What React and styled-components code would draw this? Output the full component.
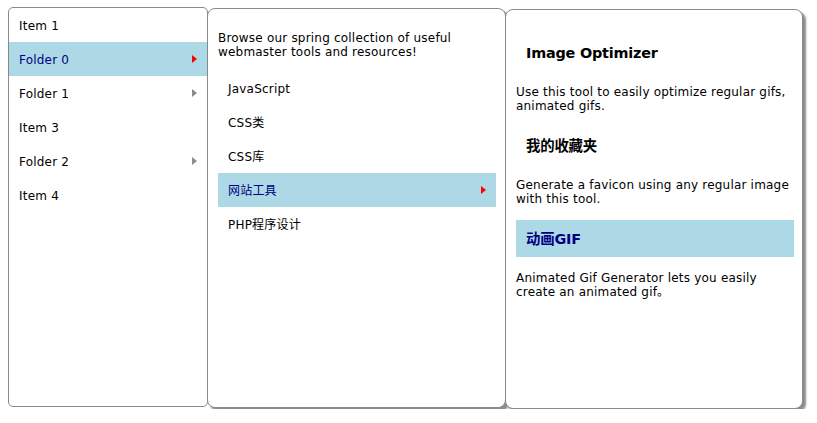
import React from "react";
import styled, { createGlobalStyle } from "styled-components";

const Global = createGlobalStyle`
  html, body { margin: 0; padding: 0; background: #fff; }
  body {
    font-family: "DejaVu Sans", Verdana, "Noto Sans CJK SC", sans-serif;
    font-size: 12px;
    color: #000;
  }
  * { box-sizing: border-box; }
`;

const Stage = styled.div`
  display: flex;
  align-items: flex-start;
  padding: 7px 8px 0 8px;
`;

const Panel = styled.div`
  position: relative;
  width: ${(p) => p.$w}px;
  height: 400px;
  margin-top: ${(p) => p.$drop}px;
  margin-left: ${(p) => (p.$first ? 0 : -1)}px;
  border: 1px solid #8a8a8a;
  border-radius: ${(p) => p.$radius}px;
  background: #fff;
  padding: ${(p) => p.$pad};
  box-shadow: ${(p) => (p.$shadow ? "3px 3px 2px rgba(0,0,0,0.45)" : "none")};
  font-family: "DejaVu Sans", Verdana, "Noto Sans CJK SC", sans-serif;
`;

const List = styled.ul`
  list-style: none;
  margin: 0;
  padding: 0;
`;

const Row = styled.li`
  display: flex;
  align-items: center;
  justify-content: space-between;
  height: 34px;
  padding: 1px 10px 0 10px;
  font-size: 12px;
  line-height: 14px;
  letter-spacing: 0.2px;
  background: ${(p) => (p.$active ? "#add8e6" : "transparent")};
  color: ${(p) => (p.$active ? "#000080" : "#000")};
`;

const Arrow = styled.span`
  width: 0;
  height: 0;
  margin-top: -1px;
  border-top: 4.5px solid transparent;
  border-bottom: 4.5px solid transparent;
  border-left: 5px solid ${(p) => (p.$active ? "#ff0000" : "#8c8c8c")};
`;

const Intro = styled.p`
  margin: 12px 0;
  font-size: 12px;
  line-height: 14px;
  letter-spacing: 0.2px;
`;

const Heading = styled.div`
  margin-top: ${(p) => (p.$first ? 14 : 0)}px;
  height: 37px;
  display: flex;
  align-items: center;
  padding: 1px 10px 0 10px;
  font-size: 14.4px;
  font-weight: bold;
  line-height: 17px;
  letter-spacing: -0.2px;
  background: ${(p) => (p.$active ? "#add8e6" : "transparent")};
  color: ${(p) => (p.$active ? "#000080" : "#000")};
`;

const Desc = styled.p`
  margin: 14px 0;
  font-size: 12px;
  line-height: 14px;
  letter-spacing: 0.2px;
`;

const rootItems = [
  { label: "Item 1" },
  { label: "Folder 0", folder: true, active: true },
  { label: "Folder 1", folder: true },
  { label: "Item 3" },
  { label: "Folder 2", folder: true },
  { label: "Item 4" },
];

const subItems = [
  { label: "JavaScript" },
  { label: "CSS类" },
  { label: "CSS库" },
  { label: "网站工具", folder: true, active: true },
  { label: "PHP程序设计" },
];

const tools = [
  {
    title: "Image Optimizer",
    text: "Use this tool to easily optimize regular gifs, animated gifs.",
  },
  {
    title: "我的收藏夹",
    text: "Generate a favicon using any regular image with this tool.",
  },
  {
    title: "动画GIF",
    active: true,
    text: "Animated Gif Generator lets you easily create an animated gif。",
  },
];

function MenuRow({ item }) {
  return (
    <Row $active={item.active}>
      <span>{item.label}</span>
      {item.folder && <Arrow $active={item.active} />}
    </Row>
  );
}

export default function App() {
  return (
    <>
      <Global />
      <Stage>
        <Panel $w={200} $drop={0} $first $radius={5} $pad="0">
          <List>
            {rootItems.map((it) => (
              <MenuRow key={it.label} item={it} />
            ))}
          </List>
        </Panel>
        <Panel $w={299} $drop={1} $radius={8} $pad="10px 9px 0 10px" $shadow>
          <Intro>
            Browse our spring collection of useful webmaster tools and resources!
          </Intro>
          <List>
            {subItems.map((it) => (
              <MenuRow key={it.label} item={it} />
            ))}
          </List>
        </Panel>
        <Panel $w={298} $drop={2} $radius={8} $pad="10px 8px 0 10px" $shadow>
          {tools.map((t, i) => (
            <React.Fragment key={t.title}>
              <Heading $first={i === 0} $active={t.active}>
                {t.title}
              </Heading>
              <Desc>{t.text}</Desc>
            </React.Fragment>
          ))}
        </Panel>
      </Stage>
    </>
  );
}
